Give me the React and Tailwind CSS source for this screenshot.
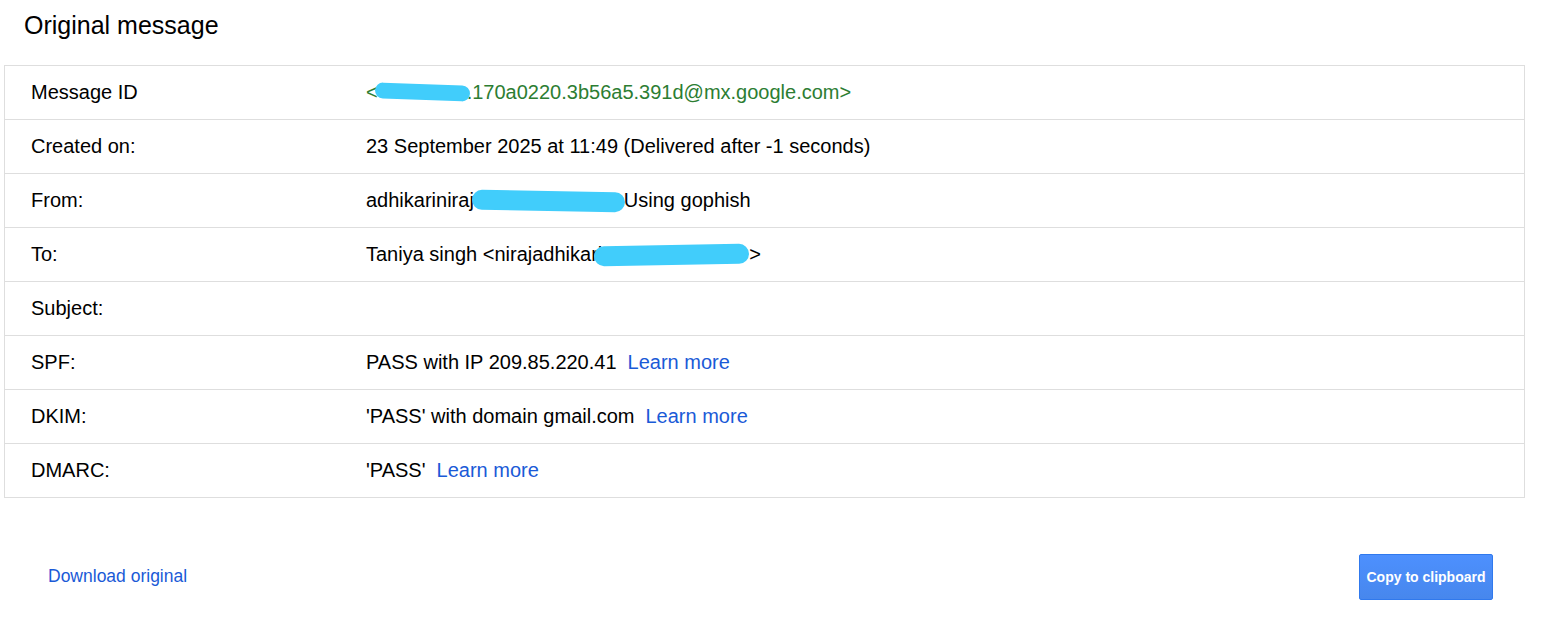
const ROWS = [
  { label: 'Message ID', kind: 'id' },
  { label: 'Created on:', text: '23 September 2025 at 11:49 (Delivered after -1 seconds)' },
  { label: 'From:', kind: 'from' },
  { label: 'To:', kind: 'to' },
  { label: 'Subject:', text: '' },
  { label: 'SPF:', text: 'PASS with IP 209.85.220.41', link: true },
  { label: 'DKIM:', text: "'PASS' with domain gmail.com", link: true },
  { label: 'DMARC:', text: "'PASS'", link: true },
]

function Blob({ className }) {
  // scribbled-out redaction
  return <span className={`inline-block bg-[#41cdfb] rounded-full align-middle ${className}`} />
}

function Value({ row }) {
  if (row.kind === 'id') {
    return (
      <span className="text-[#2c7d32] flex items-center">
        <span>&lt;</span>
        <Blob className="w-[95px] h-[16px] -ml-[3px] -mr-[3px] rotate-[2deg]" />
        <span>.170a0220.3b56a5.391d@mx.google.com&gt;</span>
      </span>
    )
  }
  if (row.kind === 'from') {
    return (
      <span className="flex items-center">
        <span>adhikariniraj</span>
        <Blob className="w-[153px] h-[20px] -ml-[2px] -mr-[1px] mt-[2px] rotate-[1deg]" />
        <span>Using gophish</span>
      </span>
    )
  }
  if (row.kind === 'to') {
    return (
      <span className="flex items-center">
        <span>Taniya singh &lt;nirajadhikari</span>
        <Blob className="w-[155px] h-[20px] -ml-[8px] mt-[2px] -rotate-[1deg]" />
        <span>&gt;</span>
      </span>
    )
  }
  return (
    <span>
      {row.text}
      {row.link && <a className="text-[#1a5ad7] ml-[11px] cursor-pointer">Learn more</a>}
    </span>
  )
}

export default function App() {
  return (
    <div className="w-[1563px] h-[627px] bg-white text-black font-['Liberation_Sans',Arial,sans-serif] overflow-hidden">
      <h1 className="pl-[24px] pt-[11px] h-[65px] text-[25px] leading-[28px]">Original message</h1>

      <div className="ml-[4px] w-[1521px] border border-[#dedede] text-[20px]">
        {ROWS.map((row, i) => (
          <div
            key={row.label}
            className={`flex items-center pb-[2px] ${i < ROWS.length - 1 ? 'h-[54px] border-b border-[#dedede]' : 'h-[53px]'}`}
          >
            <div className="w-[361px] pl-[26px]">{row.label}</div>
            <div>
              <Value row={row} />
            </div>
          </div>
        ))}
      </div>

      <div className="flex items-center justify-between mt-[56px] pl-[48px] pr-[70px]">
        <a className="text-[#1a5ad7] text-[17.5px] -mt-[2px] cursor-pointer">Download original</a>
        <button className="w-[134px] h-[46px] rounded-[2px] border border-[#3079ed] bg-gradient-to-b from-[#4d90fe] to-[#4787ed] text-white text-[14px] font-bold">
          Copy to clipboard
        </button>
      </div>
    </div>
  )
}
